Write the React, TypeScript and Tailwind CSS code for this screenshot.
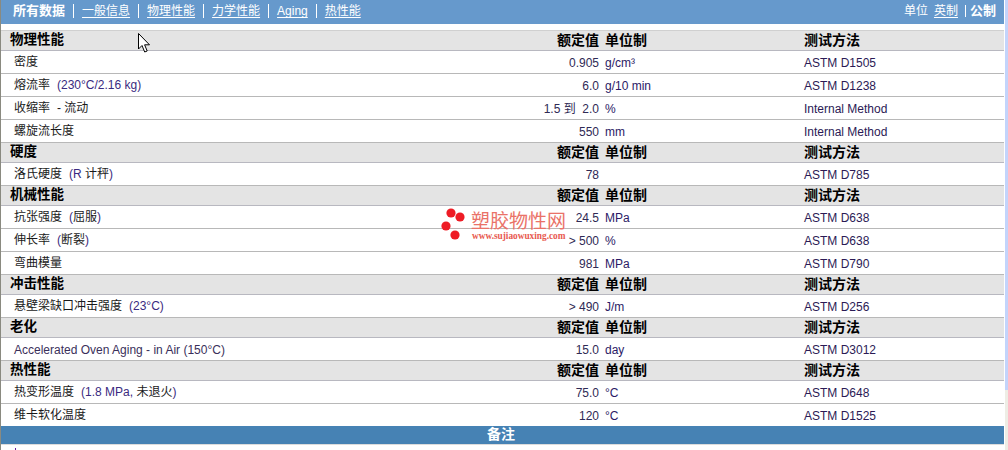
import type { ReactNode } from "react";

const F = "font-['Liberation_Sans','Noto_Sans_CJK_SC',sans-serif]";

const L = ({ children }: { children: ReactNode }) => (
  <span className="text-[#3a2a80]">{children}</span>
);

type Row = { name: string; latin?: boolean; cond?: ReactNode; value: ReactNode; unit: string; method: string; last?: boolean };
type Section = { title: string; rows: Row[] };

const sections: Section[] = [
  {
    title: "物理性能",
    rows: [
      { name: "密度", value: "0.905", unit: "g/cm³", method: "ASTM D1505" },
      { name: "熔流率", cond: <L>(230°C/2.16 kg)</L>, value: "6.0", unit: "g/10 min", method: "ASTM D1238" },
      { name: "收缩率", cond: "- 流动", value: "1.5 到  2.0", unit: "%", method: "Internal Method" },
      { name: "螺旋流长度", value: "550", unit: "mm", method: "Internal Method" },
    ],
  },
  {
    title: "硬度",
    rows: [{ name: "洛氏硬度", cond: <><L>(R </L>计秤<L>)</L></>, value: "78", unit: "", method: "ASTM D785" }],
  },
  {
    title: "机械性能",
    rows: [
      { name: "抗张强度", cond: <><L>(</L>屈服<L>)</L></>, value: "24.5", unit: "MPa", method: "ASTM D638" },
      { name: "伸长率", cond: <><L>(</L>断裂<L>)</L></>, value: "> 500", unit: "%", method: "ASTM D638" },
      { name: "弯曲模量", value: "981", unit: "MPa", method: "ASTM D790" },
    ],
  },
  {
    title: "冲击性能",
    rows: [{ name: "悬壁梁缺口冲击强度", cond: <L>(23°C)</L>, value: "> 490", unit: "J/m", method: "ASTM D256" }],
  },
  {
    title: "老化",
    rows: [{ name: "Accelerated Oven Aging - in Air (150°C)", latin: true, value: "15.0", unit: "day", method: "ASTM D3012" }],
  },
  {
    title: "热性能",
    rows: [
      { name: "热变形温度", cond: <><L>(1.8 MPa, </L>未退火<L>)</L></>, value: "75.0", unit: "°C", method: "ASTM D648" },
      { name: "维卡软化温度", value: "120", unit: "°C", method: "ASTM D1525", last: true },
    ],
  },
];

const navItems = ["一般信息", "物理性能", "力学性能", "Aging", "热性能"];

function SectionHeader({ title, first }: { title: string; first: boolean }) {
  return (
    <div
      className={`grid grid-cols-[1fr_100px_199px_200px] items-center bg-[#e4e4e4] border-b border-[#b8b8c0] pb-[2px] text-[14px] leading-[16px] font-bold text-black ${
        first ? "h-[21px] border-t border-t-[#d0d0d0]" : "h-[20px]"
      }`}
    >
      <div className="pl-[9px] text-[13.5px]">{title}</div>
      <div className="pr-[6px] text-right">额定值</div>
      <div>单位制</div>
      <div>测试方法</div>
    </div>
  );
}

function DataRow({ row }: { row: Row }) {
  return (
    <div
      className={`grid grid-cols-[1fr_100px_199px_200px] items-center bg-white text-[12px] leading-[18px] text-[#1a1a1a] ${
        row.last ? "h-[22px]" : "h-[23px] border-b border-[#b8b8b8]"
      }`}
    >
      <div className={`pl-[13px] whitespace-pre ${row.latin ? "pt-[2px] text-[#3a2f5a]" : ""}`}>
        <span>{row.name}</span>
        {row.cond && <span className="ml-[7px]">{row.cond}</span>}
      </div>
      <div className="pr-[6px] pt-[2px] text-right whitespace-pre text-[#2f2a55]">{row.value}</div>
      <div className="pt-[2px] text-[#2b1a66]">{row.unit}</div>
      <div className="pt-[2px] text-[#2b1a55]">{row.method}</div>
    </div>
  );
}

export default function App() {
  return (
    <div className={`${F} relative w-[1008px] h-[450px] overflow-hidden bg-white`}>
      <div className="flex h-full">
        <div className="w-px shrink-0 bg-[#8a8a80]" />
        <div className="w-[1003px] shrink-0 flex flex-col">
          <nav className="h-[24px] shrink-0 bg-[#6699cc] flex items-center justify-between pl-[12px] pr-[8px] pb-[2px] text-[12px] text-white">
            <div className="flex items-center">
              <span className="font-bold text-[13px]">所有数据</span>
              {navItems.map((item) => (
                <span key={item} className="flex items-center">
                  <span className="mx-[8px] h-[14px] w-px bg-white" />
                  <span className="underline underline-offset-2">{item}</span>
                </span>
              ))}
            </div>
            <div className="flex items-center">
              <span>单位</span>
              <span className="ml-[6px] underline underline-offset-2">英制</span>
              <span className="ml-[7px] mr-[4px] h-[12px] w-px bg-white" />
              <span className="font-bold text-[13px]">公制</span>
            </div>
          </nav>
          <div className="h-[6px] shrink-0 bg-white" />
          {sections.map((s, i) => (
            <div key={s.title}>
              <SectionHeader title={s.title} first={i === 0} />
              {s.rows.map((r) => (
                <DataRow key={r.name} row={r} />
              ))}
            </div>
          ))}
          <div className="h-[18px] shrink-0 bg-[#4682b4] flex items-center justify-center pr-[3px] pb-[2px] text-[14px] leading-[16px] font-bold text-white">
            备注
          </div>
          <div className="h-px shrink-0 bg-[#dcdcdc]" />
        </div>
        <div className="flex-1 bg-white" />
        <div className="w-[3px] shrink-0 flex flex-col bg-[#eeede5]">
          <div className="h-[390px] bg-[#c3d4fb]" />
        </div>
      </div>

      {/* watermark */}
      <div className="absolute left-[441px] top-[207px] w-[130px] h-[46px]">
        <svg className="absolute left-0 top-0" width="30" height="36" viewBox="0 0 30 36">
          <circle cx="10" cy="6" r="4.6" fill="#ee1c25" />
          <circle cx="19" cy="10" r="4.6" fill="#ee1c25" />
          <circle cx="5" cy="19" r="4.6" fill="#ee1c25" />
          <circle cx="14" cy="28" r="4.6" fill="#ee1c25" />
        </svg>
        <div className="absolute left-[30px] top-[5px] text-[19px] leading-[20px] whitespace-nowrap text-[#ea7268]">
          塑胶物性网
        </div>
        <div className="absolute left-[31px] top-[24px] text-[9.3px] leading-[10px] font-bold whitespace-nowrap text-[#e85a50] font-['Liberation_Serif',serif]">
          www.sujiaowuxing.com
        </div>
      </div>

      {/* mouse cursor */}
      <svg className="absolute left-[138px] top-[33px]" width="14" height="21" viewBox="0 0 14 21">
        <path d="M0.5 0.5V16L4 12.5L6.7 19L9.2 18L6.6 11.8H11.5Z" fill="#ffffff" stroke="#000000" strokeWidth="1" />
      </svg>

      {/* tick of content below the notes bar */}
      <div className="absolute left-[15px] top-[448px] h-[2px] w-px bg-[#6a1b9a]" />
    </div>
  );
}
